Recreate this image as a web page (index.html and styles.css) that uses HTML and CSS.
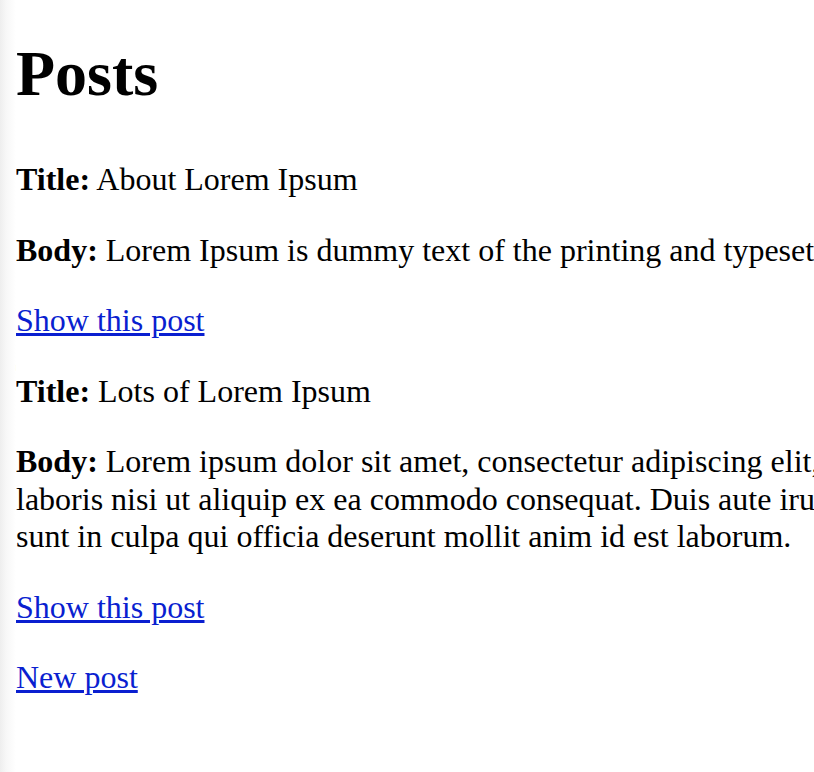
FILE: index.html
```html
<!DOCTYPE html>
<html lang="en">
<head>
<meta charset="utf-8">
<title>Posts</title>
<link rel="stylesheet" href="styles.css">
</head>
<body>
<h1 class="page-title">Posts</h1>
<div class="posts">
  <div class="post">
    <p class="field"><strong>Title:</strong> About Lorem Ipsum</p>
    <p class="field"><span class="line"><strong>Body:</strong> Lorem Ipsum is dummy text of the printing and typesetting industry. Lorem Ipsum has been the industry's standard dummy text ever since the 1500s.</span></p>
    <p class="field"><a class="link" href="#">Show this post</a></p>
  </div>
  <div class="post">
    <p class="field"><strong>Title:</strong> Lots of Lorem Ipsum</p>
    <p class="field"><span class="line"><strong>Body:</strong> Lorem ipsum dolor sit amet, consectetur adipiscing elit, sed do eiusmod tempor incididunt ut labore et dolore magna aliqua. Ut enim ad minim veniam, quis nostrud exercitation ullamco</span><span class="line">laboris nisi ut aliquip ex ea commodo consequat. Duis aute irure dolor in reprehenderit in voluptate velit esse cillum dolore eu fugiat nulla pariatur. Excepteur sint occaecat cupidatat non proident,</span><span class="line">sunt in culpa qui officia deserunt mollit anim id est laborum.</span></p>
    <p class="field"><a class="link" href="#">Show this post</a></p>
  </div>
</div>
<p class="field"><a class="link" href="#">New post</a></p>
</body>
</html>
```
FILE: styles.css
```css
html {
  overflow: hidden;
  background: linear-gradient(to right, #eeeeee 0, #f7f7f7 6px, #ffffff 16px);
  min-height: 100%;
}
body {
  margin: 16px 0 16px 16px;
  font-family: "Liberation Serif", "Times New Roman", serif;
  font-size: 32px;
  line-height: 37.5px;
  color: #000;
}
.page-title {
  font-size: 64px;
  line-height: 74px;
  font-weight: bold;
  margin: 21px 0 50px;
}
.field {
  margin: 33px 0;
}
.line {
  display: block;
  white-space: nowrap;
  overflow: hidden;
}
.link {
  color: #0a1fd0;
  text-decoration: underline;
}
```
